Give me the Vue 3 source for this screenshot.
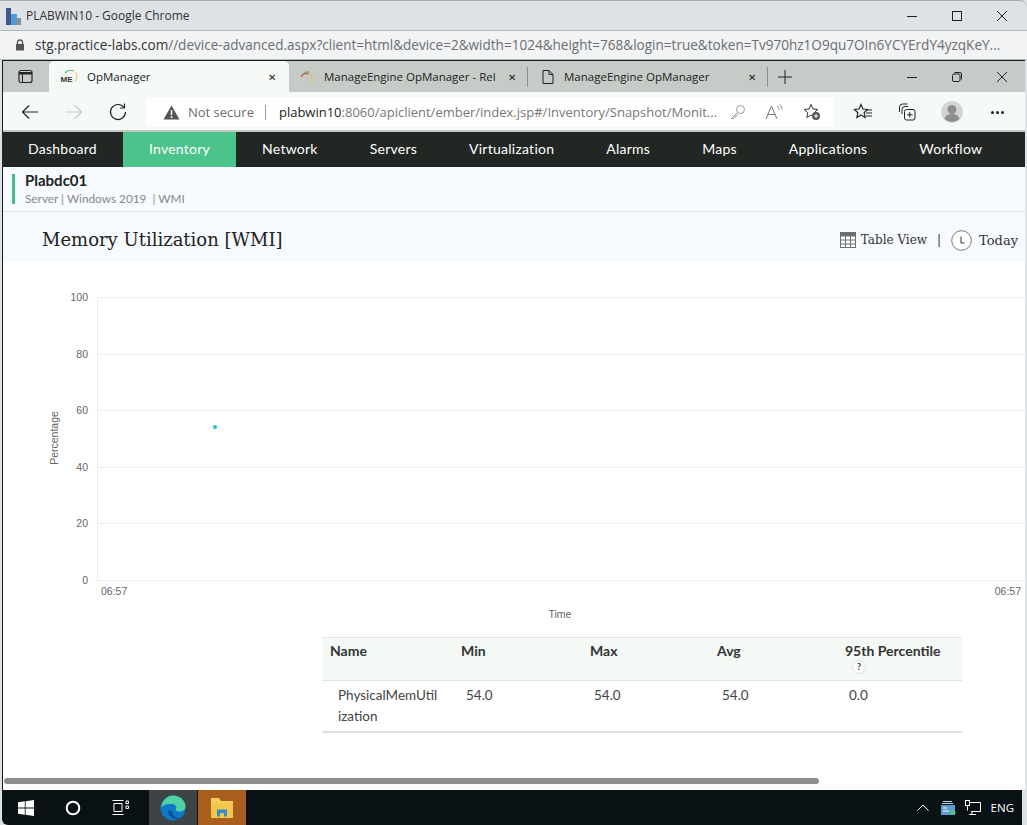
<script setup>
// OpManager memory utilization page inside a nested remote browser window.
const navItems = ['Dashboard', 'Inventory', 'Network', 'Servers', 'Virtualization', 'Alarms', 'Maps', 'Applications', 'Workflow'];

const ticks = [
  { label: '100', y: 297 },
  { label: '80', y: 354 },
  { label: '60', y: 410 },
  { label: '40', y: 467 },
  { label: '20', y: 523 },
  { label: '0', y: 580 },
];

const columns = [
  { name: 'Name', value: 'PhysicalMemUtilization', width: 131, pad: 16 },
  { name: 'Min', value: '54.0', width: 129, pad: 13 },
  { name: 'Max', value: '54.0', width: 127, pad: 12 },
  { name: 'Avg', value: '54.0', width: 128, pad: 13 },
  { name: '95th Percentile', value: '0.0', width: 125, pad: 12, help: true },
];
</script>

<template>
  <div class="screen">
    <header class="outer-title">
      <svg class="outer-logo" width="16" height="18" viewBox="0 0 16 18">
        <rect x="0" y="1" width="5" height="17" fill="#3c5a86" />
        <rect x="5" y="7" width="6" height="11" fill="#4f9bd8" />
        <rect x="11" y="11" width="4" height="7" fill="#8a8f96" />
      </svg>
      <span class="outer-title__text">PLABWIN10 - Google Chrome</span>
      <div class="win-buttons">
        <svg width="12" height="12" viewBox="0 0 12 12"><path d="M1 6.5h10" stroke="#222" fill="none" /></svg>
        <svg width="12" height="12" viewBox="0 0 12 12"><rect x="1.5" y="1.5" width="9" height="9" stroke="#222" fill="none" /></svg>
        <svg width="12" height="12" viewBox="0 0 12 12"><path d="M1 1l10 10M11 1L1 11" stroke="#222" fill="none" /></svg>
      </div>
    </header>

    <div class="outer-url">
      <svg width="10" height="12" viewBox="0 0 10 12">
        <path d="M2.5 5V3.5a2.5 2.5 0 0 1 5 0V5" stroke="#555" stroke-width="1.3" fill="none" />
        <rect x="1" y="5" width="8" height="6.5" fill="#555" />
      </svg>
      <span class="outer-url__text"><b>stg.practice-labs.com</b>//device-advanced.aspx?client=html&amp;device=2&amp;width=1024&amp;height=768&amp;login=true&amp;token=Tv970hz1O9qu7OIn6YCYErdY4yzqKeY...</span>
    </div>

    <div class="window">
      <div class="tabstrip">
        <div class="tabstrip__menu">
          <svg width="16" height="16" viewBox="0 0 16 16">
            <rect x="1" y="1.5" width="13" height="12" rx="2" stroke="#222" stroke-width="1.2" fill="none" />
            <path d="M1.5 3.5h12v1.5h-12zM4.5 4v9" stroke="#222" fill="#222" />
          </svg>
        </div>
        <div class="tab tab--active">
          <svg class="tab__icon" width="18" height="16" viewBox="0 0 18 16">
            <path d="M5 4a8 8 0 0 1 9-2" stroke="#5cb85c" stroke-width="1.2" fill="none" />
            <path d="M15.5 3.5a7 7 0 0 1-.5 9" stroke="#e3c23c" stroke-width="1" fill="none" />
            <text x="0.5" y="13" class="tab__me">ME</text>
          </svg>
          <span class="tab__label">OpManager</span>
          <span class="tab__close">✕</span>
        </div>
        <div class="tab tab--second">
          <svg class="tab__icon" width="16" height="16" viewBox="0 0 16 16">
            <path d="M2 8a6 6 0 0 1 8-3" stroke="#d9534f" stroke-width="1.2" fill="none" />
            <path d="M4 5a7 7 0 0 1 6-2" stroke="#5cb85c" stroke-width="1.2" fill="none" />
            <path d="M11 5a6 6 0 0 1 1 8" stroke="#e3c23c" stroke-width="1.2" fill="none" />
          </svg>
          <span class="tab__label">ManageEngine OpManager - Rel</span>
          <span class="tab__close">✕</span>
        </div>
        <div class="tab-sep"></div>
        <div class="tab tab--third">
          <svg class="tab__icon" width="14" height="16" viewBox="0 0 14 16">
            <path d="M2 1.5h6l4 4v9H2zM8 1.5v4h4" stroke="#222" fill="none" />
          </svg>
          <span class="tab__label">ManageEngine OpManager</span>
          <span class="tab__close">✕</span>
        </div>
        <div class="tab-sep"></div>
        <svg class="tab-new" width="16" height="16" viewBox="0 0 16 16"><path d="M8 1v14M1 8h14" stroke="#222" fill="none" /></svg>
        <div class="win-buttons win-buttons--inner">
          <svg width="12" height="12" viewBox="0 0 12 12"><path d="M1 6.5h10" stroke="#222" fill="none" /></svg>
          <svg width="12" height="12" viewBox="0 0 12 12">
            <rect x="1.5" y="3" width="7.5" height="7.5" rx="1.5" stroke="#222" fill="none" />
            <path d="M3.5 1.5h5.5a1.5 1.5 0 0 1 1.5 1.5v5.5" stroke="#222" fill="none" />
          </svg>
          <svg width="12" height="12" viewBox="0 0 12 12"><path d="M1 1l10 10M11 1L1 11" stroke="#222" fill="none" /></svg>
        </div>
      </div>

      <div class="toolbar">
        <svg class="toolbar__back" width="18" height="16" viewBox="0 0 18 16"><path d="M17 8H1.5M8 1.5L1.5 8 8 14.5" stroke="#222" stroke-width="1.2" fill="none" /></svg>
        <svg class="toolbar__fwd" width="18" height="16" viewBox="0 0 18 16"><path d="M1 8h15.5M10 1.5L16.5 8 10 14.5" stroke="#c6cac8" stroke-width="1.2" fill="none" /></svg>
        <svg class="toolbar__reload" width="18" height="18" viewBox="0 0 18 18">
          <path d="M15 4.5A7.5 7.5 0 1 0 16.5 9" stroke="#222" stroke-width="1.2" fill="none" />
          <path d="M15.5 0.5v4.5H11" stroke="#222" stroke-width="1.2" fill="none" />
        </svg>
        <div class="omnibox">
          <svg width="17" height="15" viewBox="0 0 17 15">
            <path d="M8.5 0.5L16.5 14.5H0.5z" fill="#555" />
            <path d="M8.5 5v5M8.5 11v2" stroke="#fff" stroke-width="1.5" />
          </svg>
          <span class="omnibox__warn">Not secure</span>
          <span class="omnibox__sep"></span>
          <span class="omnibox__url"><b>plabwin10</b>:8060/apiclient/ember/index.jsp#/Inventory/Snapshot/Monit...</span>
          <svg class="omni-key" width="16" height="16" viewBox="0 0 16 16">
            <circle cx="10.5" cy="5.5" r="4" stroke="#9a9a9a" fill="none" />
            <path d="M7.5 8.5L1.5 14.5h2.5l1-1v-1.5h1.5l1.5-2" stroke="#9a9a9a" fill="none" />
          </svg>
          <svg class="omni-read" width="20" height="16" viewBox="0 0 20 16">
            <path d="M1 15L6.5 2 12 15M3 10.5h7" stroke="#777" fill="none" />
            <path d="M12 2c1.5 1 2 2 2 3.5M14.5 0.5c2 1.5 2.5 3 2.5 5" stroke="#888" fill="none" />
          </svg>
          <svg class="omni-fav" width="18" height="18" viewBox="0 0 18 18">
            <path d="M8 1.5l2 4.5 4.8.5-3.6 3.2 1 4.8L8 12l-4.2 2.5 1-4.8L1.2 6.5 6 6z" stroke="#333" fill="none" />
            <circle cx="13" cy="13" r="4" fill="#555" />
            <path d="M13 11v4M11 13h4" stroke="#fff" />
          </svg>
        </div>
        <div class="toolbar__right">
          <svg width="20" height="18" viewBox="0 0 20 18">
            <path d="M8 1.5l2 4.5 4.5.5-3.4 3.2 1 4.8L8 12l-4.1 2.5 1-4.8L1.5 6.5 6 6z" stroke="#222" stroke-width="1.2" fill="none" />
            <path d="M14 7h5M13 10h6M13 13h6" stroke="#222" />
          </svg>
          <svg width="18" height="18" viewBox="0 0 18 18">
            <path d="M1.5 9V4a3 3 0 0 1 3-3h5M4 11V6.5a3 3 0 0 1 3-3h3" stroke="#222" fill="none" />
            <rect x="6.5" y="6.5" width="10.5" height="10.5" rx="2" stroke="#222" fill="none" />
            <path d="M11.75 9v5.5M9 11.75h5.5" stroke="#222" />
          </svg>
          <svg width="22" height="22" viewBox="0 0 22 22">
            <circle cx="11" cy="11" r="11" fill="#d3d5d3" />
            <circle cx="11" cy="8.5" r="4.5" fill="#8d8f8d" />
            <path d="M3.5 18c1-4 4-5 7.5-5s6.5 1 7.5 5a11 11 0 0 1-15 0z" fill="#8d8f8d" />
          </svg>
          <span class="toolbar__dots">
            <i></i><i></i><i></i>
          </span>
        </div>
      </div>

      <nav class="nav">
        <a v-for="item in navItems" :key="item" class="nav__item" :class="{ 'nav__item--active': item === 'Inventory' }">{{ item }}</a>
      </nav>

      <div class="device">
        <div class="device__mark"></div>
        <div>
          <div class="device__name">Plabdc01</div>
          <div class="device__meta">Server | Windows 2019 &nbsp;| WMI</div>
        </div>
      </div>

      <div class="heading">
        <h1 class="heading__title">Memory Utilization [WMI]</h1>
        <div class="heading__actions">
          <svg width="16" height="16" viewBox="0 0 16 16">
            <rect x="0.5" y="0.5" width="15" height="15" fill="#fff" stroke="#6d6f71" />
            <rect x="0.5" y="0.5" width="15" height="4" fill="#6d6f71" />
            <path d="M0.5 8h15M0.5 12h15M5.5 4v12M10.5 4v12" stroke="#6d6f71" />
          </svg>
          <span class="heading__link">Table View</span>
          <span class="heading__bar">|</span>
          <svg width="21" height="21" viewBox="0 0 21 21">
            <circle cx="10.5" cy="10.5" r="9.8" stroke="#777" fill="#fff" />
            <path d="M10 6.5v6.5h3.5" stroke="#333" fill="none" />
          </svg>
          <span class="heading__link heading__link--today">Today</span>
        </div>
      </div>

      <div class="content">
        <svg class="chart" width="1025" height="375" viewBox="0 262 1025 375">
          <line v-for="t in ticks" :key="t.label" x1="97" x2="1025" :y1="t.y + 0.5" :y2="t.y + 0.5" class="chart__grid" />
          <line x1="97.5" x2="97.5" y1="297" y2="580" class="chart__grid" />
          <text v-for="t in ticks" :key="'l' + t.label" x="88" :y="t.y + 4" text-anchor="end" class="chart__label">{{ t.label }}</text>
          <text x="58" y="438" text-anchor="middle" transform="rotate(-90 58 438)" class="chart__label">Percentage</text>
          <text x="101" y="595" class="chart__label">06:57</text>
          <text x="1021" y="595" text-anchor="end" class="chart__label">06:57</text>
          <text x="560" y="618" text-anchor="middle" class="chart__label">Time</text>
          <circle cx="215" cy="427" r="2" fill="#1fc5c9" />
        </svg>

        <div class="stats">
          <div class="stats__head">
            <div v-for="c in columns" :key="c.name" class="stats__th" :style="{ width: c.width + 'px' }">
              {{ c.name }}
              <span v-if="c.help" class="stats__help">?</span>
            </div>
          </div>
          <div class="stats__row">
            <div v-for="c in columns" :key="c.name" class="stats__td" :style="{ width: c.width + 'px', paddingLeft: c.pad + 'px' }">{{ c.value }}</div>
          </div>
        </div>
      </div>

      <div class="scrollbar"><div class="scrollbar__thumb"></div></div>
    </div>

    <footer class="taskbar">
      <svg class="task-start" width="16" height="16" viewBox="0 0 16 16">
        <path d="M0 2.3l6.8-1v6.3H0zM7.6 1.2L16 0v7.6H7.6zM0 8.4h6.8v6.3l-6.8-1zM7.6 8.4H16V16l-8.4-1.2z" fill="#fff" />
      </svg>
      <svg class="task-search" width="16" height="16" viewBox="0 0 16 16"><circle cx="8" cy="8" r="6.3" stroke="#fff" stroke-width="2" fill="none" /></svg>
      <svg class="task-view" width="17" height="15" viewBox="0 0 17 15">
        <path d="M0.5 0.5h11M0.5 14.5h11M2 3.5h8v8H2zM14 1h2.5v2.5H14zM14 6h2.5v2.5H14z" stroke="#fff" fill="none" />
      </svg>
      <div class="task-cell task-cell--edge">
        <svg width="26" height="26" viewBox="0 0 26 26">
          <circle cx="13" cy="13" r="12.5" fill="#0f78c8" />
          <path d="M1 13C2 5 8 .5 13 .5c7 0 12.5 5 12.5 11 0 3-2.5 5-6 5-2.5 0-4-1-4-2 1.5-1 1.5-5-3-5.500C7 8.500 3 9.500 1 13z" fill="#4fd3a5" />
          <path d="M8 15c0 5 4 9 9.5 9 1.500 0 3-.5 4-1.500-5 1.500-9-1-9-5.500z" fill="#0a4f92" />
        </svg>
      </div>
      <div class="task-cell task-cell--files">
        <svg width="24" height="24" viewBox="0 0 24 24">
          <path d="M1 2h8l2 3h12v17H1z" fill="#f6cf5a" />
          <rect x="1" y="7" width="22" height="15" fill="#f3c548" />
          <path d="M7 13.5h10v7h-3V17h-4v3.500H7z" fill="#2f8fd1" />
        </svg>
      </div>
      <div class="tray">
        <svg width="12" height="7" viewBox="0 0 12 7"><path d="M0.5 6.500L6 1l5.500 5.500" stroke="#fff" fill="none" /></svg>
        <svg width="15" height="14" viewBox="0 0 15 14">
          <path d="M2 0.5h9M1 2.5h11" stroke="#c6d7e8" />
          <rect x="0" y="4" width="14" height="10" fill="#5b9bd0" />
          <path d="M2 7h4M2 10h6" stroke="#fff" />
          <circle cx="12" cy="11.5" r="2.5" fill="#4cc38a" />
        </svg>
        <svg class="tray__net" width="16" height="15" viewBox="0 0 16 15">
          <path d="M4 2.5h11.500v9H6M7 11.500V14M4 14.500h7" stroke="#fff" fill="none" />
          <rect x="0.5" y="0.5" width="4" height="5" stroke="#fff" fill="#0b1216" />
          <path d="M2.500 5.500v5" stroke="#fff" />
        </svg>
        <span class="tray__lang">ENG</span>
      </div>
    </footer>
  </div>
</template>

<style scoped>
.screen {
  width: 1027px;
  height: 825px;
  display: flex;
  flex-direction: column;
  overflow: hidden;
  background: #dee1e6;
  font-family: "Open Sans", "Noto Sans", sans-serif;
  color: #222;
}

.outer-title {
  height: 31px;
  flex: none;
  display: flex;
  align-items: center;
  padding-left: 6px;
  background: #dee1e6;
  border-top: 1px solid #a9acb0;
  border-bottom: 1px solid #b4b7bb;
  box-sizing: border-box;
  border-top-right-radius: 7px;
}

.outer-logo {
  margin-right: 4px;
}

.outer-title__text {
  font-size: 12px;
  color: #333;
}

.win-buttons {
  margin-left: auto;
  display: flex;
  gap: 33px;
  padding-right: 19px;
  align-items: center;
}

.outer-url {
  height: 29px;
  flex: none;
  display: flex;
  align-items: center;
  gap: 10px;
  padding-left: 15px;
  box-sizing: border-box;
  background: #f1f3f4;
  border-bottom: 1px solid #b8bbbf;
}

.outer-url__text {
  font-size: 13.55px;
  color: #6b6e72;
  white-space: nowrap;
}

.outer-url__text b {
  font-weight: 400;
  color: #333;
}

.window {
  flex: 1;
  min-height: 0;
  display: flex;
  flex-direction: column;
  margin: 0 2px;
  background: #fff;
  border-top: 1px solid #1b1b1b;
  border-left: 1px solid #1b1b1b;
}

.tabstrip {
  height: 31px;
  flex: none;
  display: flex;
  align-items: center;
  background: #c7cbc7;
}

.tabstrip__menu {
  width: 46px;
  height: 100%;
  display: flex;
  align-items: center;
  justify-content: center;
  flex: none;
}

.tab {
  height: 100%;
  flex: none;
  display: flex;
  align-items: center;
  box-sizing: border-box;
  font-size: 11.5px;
}

.tab--active {
  width: 240px;
  padding-left: 11px;
  padding-right: 13px;
  background: #f5faf7;
  border-radius: 5px 5px 0 0;
}

.tab--second {
  width: 238px;
  padding-left: 10px;
  padding-right: 11px;
}

.tab--third {
  width: 239px;
  padding-left: 13px;
  padding-right: 11px;
}

.tab__icon {
  flex: none;
  margin-right: 9px;
}

.tab__me {
  font: bold 8px "Liberation Sans", sans-serif;
  fill: #333;
}

.tab__label {
  flex: 1;
  min-width: 0;
  overflow: hidden;
  white-space: nowrap;
  color: #222;
}

.tab__close {
  font-size: 10px;
  color: #222;
  flex: none;
}

.tab-sep {
  width: 1px;
  height: 20px;
  background: #8a8d8a;
  flex: none;
}

.tab-new {
  margin-left: 9px;
  flex: none;
}

.win-buttons--inner {
  padding-right: 17px;
}

.toolbar {
  height: 36px;
  flex: none;
  display: flex;
  align-items: center;
  padding-top: 2px;
  background: #f5faf7;
  border-bottom: 2px solid #c5c8c5;
}

.toolbar__back {
  margin-left: 18px;
}

.toolbar__fwd {
  margin-left: 26px;
}

.toolbar__reload {
  margin-left: 26px;
}

.omnibox {
  width: 687px;
  height: 30px;
  margin-left: 19px;
  flex: none;
  display: flex;
  align-items: center;
  padding-left: 17px;
  box-sizing: border-box;
  background: #fff;
  border-radius: 4px;
  font-size: 13px;
}

.omnibox__warn {
  margin-left: 8px;
  color: #6b6e72;
}

.omnibox__sep {
  width: 1px;
  height: 15px;
  margin: 0 13px 0 11px;
  background: #9a9a9a;
}

.omnibox__url {
  color: #777;
  white-space: nowrap;
  width: 439px;
}

.omnibox__url b {
  font-weight: 400;
  color: #222;
}

.omni-key {
  margin-left: 12px;
  flex: none;
}

.omni-read {
  margin-left: 19px;
  flex: none;
}

.omni-fav {
  margin-left: 18px;
  flex: none;
}

.toolbar__right {
  display: flex;
  align-items: center;
  gap: 25px;
  margin-left: 20px;
}

.toolbar__dots {
  display: flex;
  gap: 2px;
  margin-left: 3px;
}

.toolbar__dots i {
  width: 3px;
  height: 3px;
  border-radius: 50%;
  background: #222;
}

.nav {
  height: 35px;
  flex: none;
  display: flex;
  margin-left: -1px;
  background: #222723;
  font-family: Lato, sans-serif;
  font-size: 14px;
  letter-spacing: 0.25px;
  line-height: 33px;
}

.nav__item {
  padding: 0 26px;
  color: #fff;
  white-space: nowrap;
}

.nav__item--active {
  background: #4cc38a;
}

.device {
  height: 45px;
  flex: none;
  display: flex;
  gap: 10px;
  padding: 7px 0 0 9px;
  box-sizing: border-box;
  background: #f7faff;
  border-bottom: 1px solid #e2e6ea;
  font-family: Lato, sans-serif;
}

.device__mark {
  width: 3px;
  height: 30px;
  background: #4cb88a;
}

.device__name {
  margin-top: -2px;
  font-size: 15px;
  line-height: 16px;
  font-weight: 700;
  color: #222;
}

.device__meta {
  margin-top: 3px;
  font-size: 11.8px;
  line-height: 16px;
  color: #888;
}

.heading {
  height: 50px;
  flex: none;
  display: flex;
  align-items: center;
  justify-content: space-between;
  padding: 5px 7px 0 39px;
  box-sizing: border-box;
  background: #f6f9fd;
  font-family: "DejaVu Serif", serif;
}

.heading__title {
  margin: 0;
  font-size: 18px;
  font-weight: 400;
  color: #222;
  white-space: nowrap;
}

.heading__actions {
  display: flex;
  align-items: center;
  padding-top: 1px;
  font-size: 12px;
  color: #333;
}

.heading__link {
  margin-left: 5px;
}

.heading__link--today {
  font-size: 13px;
  margin-left: 7px;
}

.heading__bar {
  margin: 0 10px;
}

.content {
  flex: 1;
  min-height: 0;
  overflow: hidden;
}

.chart {
  display: block;
  margin-left: -3px;
}

.chart__grid {
  stroke: #eceeee;
}

.chart__label {
  font: 10.5px "Liberation Sans", sans-serif;
  fill: #666;
}

.stats {
  width: 640px;
  margin-left: 319px;
  font-family: Lato, sans-serif;
  font-size: 13.5px;
}

.stats__head {
  display: flex;
  height: 44px;
  box-sizing: border-box;
  padding-top: 4px;
  background: #f5f9f6;
  border-top: 1px solid #e4e6e5;
  border-bottom: 1px solid #e4e6e5;
}

.stats__th {
  padding-left: 8px;
  box-sizing: border-box;
  font-size: 14px;
  font-weight: 700;
  line-height: 17px;
  color: #333;
}

.stats__help {
  display: block;
  width: 12px;
  height: 12px;
  margin: 1px 0 0 7px;
  border-radius: 50%;
  background: #fff;
  border: 1px solid #ddd;
  font-size: 9px;
  line-height: 12px;
  text-align: center;
}

.stats__row {
  display: flex;
  height: 52px;
  box-sizing: border-box;
  padding-top: 4px;
  border-bottom: 2px solid #dfe1e0;
}

.stats__td {
  box-sizing: border-box;
  line-height: 21px;
  padding-right: 14px;
  overflow-wrap: anywhere;
  color: #444;
}

.scrollbar {
  height: 9px;
  flex: none;
  padding: 0 0 3px 1px;
  box-sizing: content-box;
}

.scrollbar__thumb {
  width: 815px;
  height: 6px;
  border-radius: 3px;
  background: #8e8e8e;
}

.taskbar {
  height: 35px;
  flex: none;
  display: flex;
  align-items: center;
  margin-left: 2px;
  background: #0b1216;
  border-bottom-left-radius: 6px;
  margin-right: 5px;
}

.task-start {
  margin-left: 16px;
  flex: none;
}

.task-search {
  margin-left: 31px;
  flex: none;
}

.task-view {
  margin-left: 31px;
  flex: none;
}

.task-cell {
  width: 48px;
  height: 100%;
  display: flex;
  align-items: center;
  justify-content: center;
  flex: none;
}

.task-cell--edge {
  margin-left: 20px;
  background: #3e4446;
}

.task-cell--files {
  margin-left: 1px;
  background: #a85f1c;
}

.tray {
  margin-left: auto;
  display: flex;
  align-items: center;
  gap: 12px;
  padding-right: 8px;
  color: #fff;
}

.tray__net {
  margin-left: -3px;
}

.tray__lang {
  margin-left: -2px;
  font-size: 11.5px;
}
</style>

<style>
html,
body {
  margin: 0;
  background: #dee1e6;
}
</style>
